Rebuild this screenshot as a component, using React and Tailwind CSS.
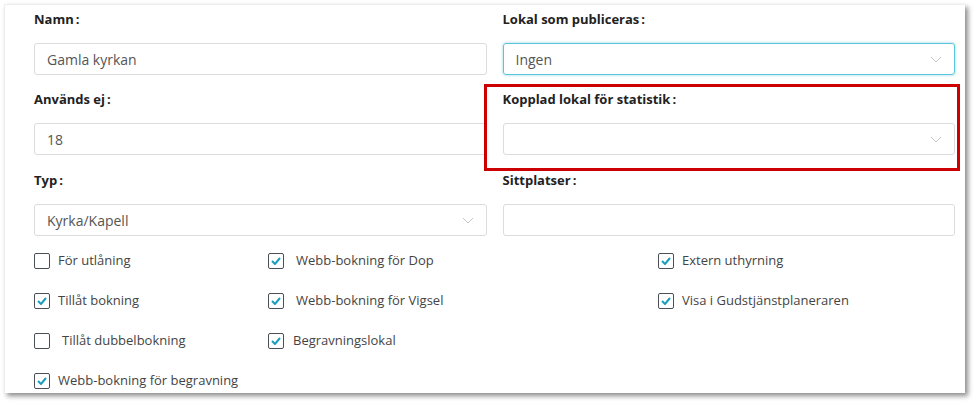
import React from 'react'

const Chevron = () => (
  <svg width="12" height="7" viewBox="0 0 12 7" fill="none" className="shrink-0">
    <path d="M1 1l5 5 5-5" stroke="#c4c4c4" strokeWidth="1" />
  </svg>
)

const Label = ({ children }) => (
  <div className="h-5 flex items-center text-[13px] font-bold text-[#222] mb-[13px]">
    {children}
    <span className="ml-[2px]">:</span>
  </div>
)

const TextInput = ({ value, focused }) => (
  <div
    className={
      focused
        ? 'h-8 rounded-[3px] border border-[#5bc4dc] shadow-[0_0_3px_rgba(91,196,220,0.7)] flex items-center px-3 text-[14px] text-[#555]'
        : 'h-8 rounded-[3px] border border-[#dcdcdc] flex items-center px-3 text-[14px] text-[#555]'
    }
  >
    {value}
  </div>
)

const Select = ({ value, focused }) => (
  <div
    className={
      focused
        ? 'h-8 rounded-[3px] border border-[#5bc4dc] shadow-[0_0_3px_rgba(91,196,220,0.7)] flex items-center justify-between pl-3 pr-[12px] text-[14px] text-[#555]'
        : 'h-8 rounded-[3px] border border-[#dcdcdc] flex items-center justify-between pl-3 pr-[12px] text-[14px] text-[#555]'
    }
  >
    <span>{value}</span>
    <Chevron />
  </div>
)

const Check = ({ checked, label, gap }) => (
  <div className="h-10 flex items-center">
    <div className="w-4 h-4 rounded-[2px] border border-[#4a4f55] flex items-center justify-center shrink-0">
      {checked && (
        <svg width="10" height="8" viewBox="0 0 10 8" fill="none">
          <path d="M1 4l3 3 5-6" stroke="#1a9cc0" strokeWidth="2" />
        </svg>
      )}
    </div>
    <span className={`${gap} text-[13px] text-[#444]`}>{label}</span>
  </div>
)

export default function App() {
  return (
    <div className="w-[975px] h-[402px] bg-white pl-1 pt-1" style={{ fontFamily: '"Open Sans", sans-serif' }}>
      <div className="relative w-[961px] h-[389px] bg-white border-l border-t border-[#eeeeee] shadow-[3px_3px_5px_rgba(0,0,0,0.45)] pl-[29px] pr-[10px] pt-[5px]">
        <div className="grid grid-cols-2 gap-x-4">
          <div>
            <Label>Namn</Label>
            <TextInput value="Gamla kyrkan" />
          </div>
          <div>
            <Label>Lokal som publiceras</Label>
            <Select value="Ingen" focused />
          </div>
          <div className="mt-[15px]">
            <Label>Används ej</Label>
            <TextInput value="18" />
          </div>
          <div className="mt-[15px]">
            <Label>Kopplad lokal för statistik</Label>
            <Select value="" />
          </div>
          <div className="mt-4">
            <Label>Typ</Label>
            <Select value="Kyrka/Kapell" />
          </div>
          <div className="mt-4">
            <Label>Sittplatser</Label>
            <TextInput value="" />
          </div>
        </div>

        <div className="grid grid-cols-[234px_390px_1fr] mt-[5px]">
          <Check label="För utlåning" gap="ml-[8px]" />
          <Check checked label="Webb-bokning för Dop" gap="ml-[12px]" />
          <Check checked label="Extern uthyrning" gap="ml-[8px]" />
          <Check checked label="Tillåt bokning" gap="ml-[8px]" />
          <Check checked label="Webb-bokning för Vigsel" gap="ml-[12px]" />
          <Check checked label="Visa i Gudstjänstplaneraren" gap="ml-[8px]" />
          <Check label="Tillåt dubbelbokning" gap="ml-[12px]" />
          <Check checked label="Begravningslokal" gap="ml-[9px]" />
          <div />
          <Check checked label="Webb-bokning för begravning" gap="ml-[8px]" />
        </div>

        {/* red annotation frame */}
        <div className="absolute left-[479px] top-[79px] w-[476px] h-[87px] border-[3px] border-[#cc0000] pointer-events-none" />
      </div>
    </div>
  )
}
